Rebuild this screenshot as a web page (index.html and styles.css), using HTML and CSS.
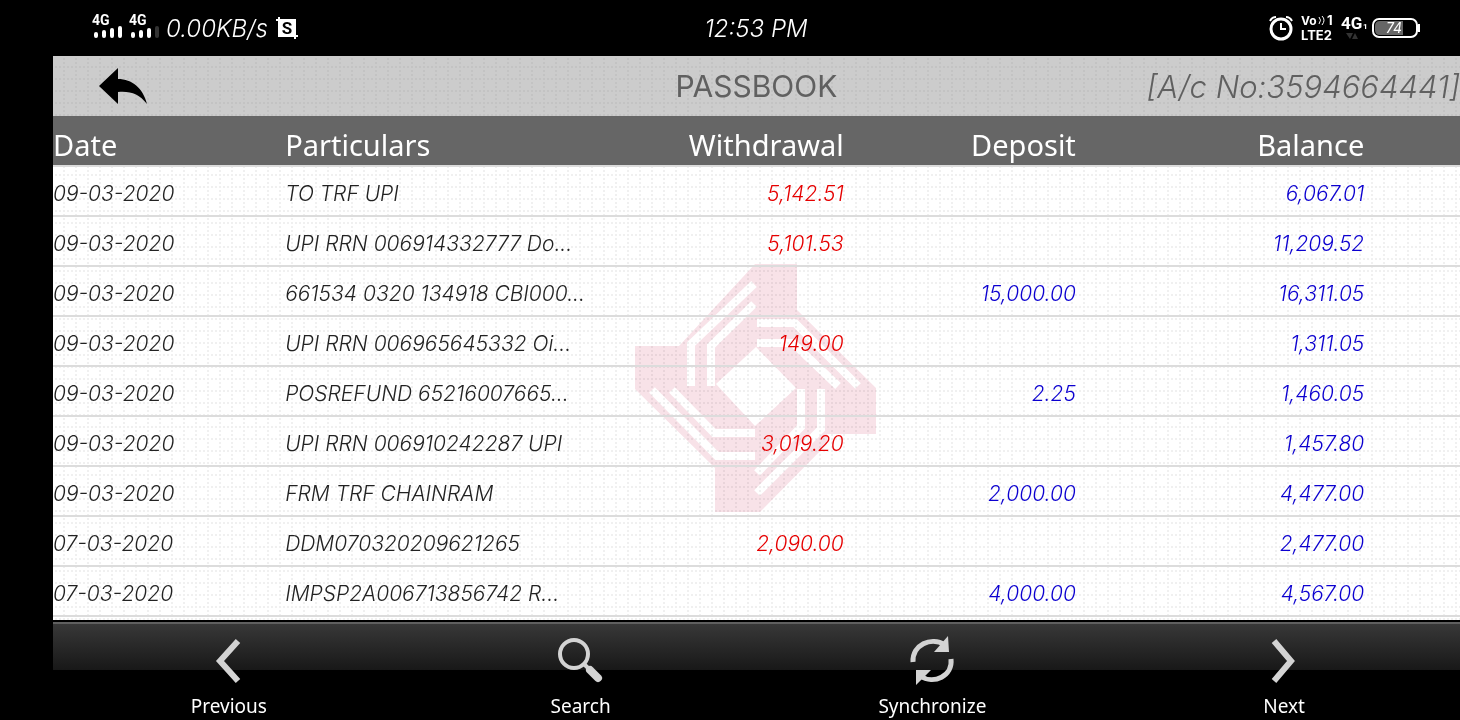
FILE: index.html
```html
<!DOCTYPE html>
<html lang="en">
  <head>
    <meta charset="UTF-8" />
    <meta name="viewport" content="width=device-width, initial-scale=1.0" />
    <title>Passbook</title>
    <link rel="stylesheet" href="styles.css">
  </head>
  <body>
    <div class="status">
      <div class="status-left">
        <svg class="signal" viewBox="0 0 66 28">
          <text x="0" y="11">4G</text>
          <text x="37" y="11">4G</text>
          <path d="M4 20v2M12 18v4M20 16v6M28 14v8M41 20v2M49 18v4M57 16v6" stroke="#fff" stroke-width="4" stroke-linecap="round" />
          <path d="M65 14v8" stroke="#333" stroke-width="4" stroke-linecap="round" />
        </svg>
        <span class="speed">0.00KB/s</span>
        <svg class="crop" viewBox="0 0 22 22">
          <path d="M0 3h19v19M3 0v19h19" fill="none" stroke="#fff" stroke-width="2" />
          <path d="M3 3h16v16H3z" fill="#fff" />
          <text x="11" y="17" text-anchor="middle">S</text>
        </svg>
      </div>
      <time class="clock">12:53 PM</time>
      <div class="status-right">
        <svg class="alarm" viewBox="0 0 24 24" fill="none" stroke="#fff" stroke-width="3">
          <circle cx="12" cy="13" r="10" />
          <path d="M12 7v6h5M1 5q2-4 6-4M23 5q-2-4-6-4" stroke-width="2" />
        </svg>
        <svg class="volte" viewBox="0 0 34 28">
          <text x="1" y="11" font-size="12">Vo</text>
          <path d="M19 3q3 3 0 7M22 2q4 4 0 9" fill="none" stroke="#fff" />
          <text x="27" y="11" font-size="13">1</text>
          <text x="1" y="26" font-size="13">LTE2</text>
        </svg>
        <svg class="network" viewBox="0 0 24 28">
          <text x="0" y="15" font-size="17">4G</text>
          <text x="22" y="15" font-size="8">1</text>
          <path d="M5 19h7l-3 6zM11 25h6l-3-6z" fill="#333" />
        </svg>
        <svg class="battery" viewBox="0 0 48 20">
          <rect x="1" y="1" width="44" height="18" rx="6" fill="none" stroke="#fff" stroke-width="2" />
          <path d="M8 3h23v14H8q-5 0-5-5V8q0-5 5-5z" fill="#666" />
          <path d="M47 6v8" stroke="#fff" stroke-width="2" />
          <text x="22" y="15" text-anchor="middle">74</text>
        </svg>
      </div>
    </div>

    <div class="app">
      <header class="titlebar">
        <button class="back" aria-label="Back">
          <svg viewBox="0 0 48 37"><path d="M0 18L19 0v11c14 0 25 9 29 25c-8-10-16-13-29-12v12z" /></svg>
        </button>
        <h1>PASSBOOK</h1>
        <span class="account">[A/c No:3594664441]</span>
      </header>

      <main class="passbook">
        <svg class="watermark" viewBox="0 0 242 252">
          <path d="M121 2h42v46l79 78v46h-49v10l-67 68H81v-44L1 127V84h44z" fill="#f8e2e8" />
          <g fill="none" stroke="#fff" stroke-width="8">
            <path d="M120 22L57 82v42M120 42L77 84v40" />
            <path d="M123 61h38l63 63M123 81h36l45 43" />
            <path d="M18 128l65 66h38M38 128l42 43h41" />
            <path d="M187 127v40l-64 64M167 127v38l-44 46" />
          </g>
          <path d="M122 85l40 41-41 38-39-42z" fill="#fff" />
        </svg>
        <table>
          <colgroup>
            <col class="col-date">
            <col class="col-particulars">
            <col class="col-withdrawal">
            <col class="col-deposit">
            <col class="col-balance">
            <col>
          </colgroup>
          <thead>
            <tr><th>Date</th><th>Particulars</th><th class="num">Withdrawal</th><th class="num">Deposit</th><th class="num">Balance</th><th></th></tr>
          </thead>
          <tbody>
            <tr><td>09-03-2020</td><td>TO TRF UPI</td><td class="num debit">5,142.51</td><td></td><td class="num">6,067.01</td><td></td></tr>
            <tr><td>09-03-2020</td><td>UPI RRN 006914332777 Do...</td><td class="num debit">5,101.53</td><td></td><td class="num">11,209.52</td><td></td></tr>
            <tr><td>09-03-2020</td><td>661534 0320 134918 CBI000...</td><td></td><td class="num">15,000.00</td><td class="num">16,311.05</td><td></td></tr>
            <tr><td>09-03-2020</td><td>UPI RRN 006965645332 Oi...</td><td class="num debit">149.00</td><td></td><td class="num">1,311.05</td><td></td></tr>
            <tr><td>09-03-2020</td><td>POSREFUND 65216007665...</td><td></td><td class="num">2.25</td><td class="num">1,460.05</td><td></td></tr>
            <tr><td>09-03-2020</td><td>UPI RRN 006910242287 UPI</td><td class="num debit">3,019.20</td><td></td><td class="num">1,457.80</td><td></td></tr>
            <tr><td>09-03-2020</td><td>FRM TRF CHAINRAM</td><td></td><td class="num">2,000.00</td><td class="num">4,477.00</td><td></td></tr>
            <tr><td>07-03-2020</td><td>DDM070320209621265</td><td class="num debit">2,090.00</td><td></td><td class="num">2,477.00</td><td></td></tr>
            <tr><td>07-03-2020</td><td>IMPSP2A006713856742 R...</td><td></td><td class="num">4,000.00</td><td class="num">4,567.00</td><td></td></tr>
          </tbody>
        </table>
      </main>

      <nav class="toolbar">
        <button>
          <svg viewBox="0 0 48 48"><path d="M33 5L15 25l18 20" fill="none" stroke="#d3d3d3" stroke-width="6" /></svg>
          Previous
        </button>
        <button>
          <svg viewBox="0 0 48 48" fill="none" stroke="#d3d3d3">
            <circle cx="17" cy="18" r="14" stroke-width="4" />
            <path d="M27 28l5 5" stroke-width="4" />
            <path d="M33 34l8 8" stroke-width="8" stroke-linecap="round" />
          </svg>
          Search
        </button>
        <button>
          <svg viewBox="0 0 48 48">
            <path d="M5 26C4 9 23 0 37 9M43 23c2 17-17 26-31 17" fill="none" stroke="#d3d3d3" stroke-width="5" />
            <path d="M40 0l1 16H26zM8 49V34h15z" fill="#d3d3d3" />
          </svg>
          Synchronize
        </button>
        <button>
          <svg viewBox="0 0 48 48"><path d="M14 5l17 20-17 20" fill="none" stroke="#d3d3d3" stroke-width="6" /></svg>
          Next
        </button>
      </nav>
    </div>
  </body>
</html>
```
FILE: styles.css
```css
:root {
  --title-bg: #ccc;
  --head-bg: #666;
  --text: #222;
  --debit: #e60000;
  --credit: #0c00d0;
  --line: #dcdcdc;
}

* {
  box-sizing: border-box;
}

body {
  display: flex;
  flex-direction: column;
  min-height: 100vh;
  margin: 0;
  background: #000;
  color: #fff;
  font-family: "Noto Sans", "Open Sans", sans-serif;
}

.status {
  display: grid;
  grid-template-columns: 1fr auto 1fr;
  align-items: center;
  height: 56px;
  padding: 0 40px 0 92px;
  font-family: Inter, sans-serif;
  font-size: 24px;
  font-style: italic;
  font-weight: 300;
}

.status-left, .status-right {
  display: flex;
  align-items: center;
  gap: 8px;
}

.status-right {
  justify-content: flex-end;
  gap: 7px;
}

.status svg {
  overflow: visible;
  fill: #fff;
  font-family: Roboto, sans-serif;
  font-style: normal;
  font-weight: 700;
}

.status .signal {
  width: 66px;
  height: 28px;
  font-size: 14px;
}

.status .crop {
  width: 22px;
  height: 22px;
}

.crop text {
  fill: #000;
  font-size: 17px;
}

.status .alarm {
  width: 24px;
  height: 24px;
  fill: none;
}

.status .volte {
  width: 34px;
  height: 28px;
  font-family: Inter, sans-serif;
}

.network {
  width: 24px;
  height: 28px;
}

.battery {
  width: 48px;
  height: 20px;
}

.battery text {
  font-family: Inter, sans-serif;
  font-size: 14px;
  font-style: italic;
  font-weight: 400;
}

.app {
  display: flex;
  flex: 1;
  flex-direction: column;
  margin-left: 53px;
}

/* dotted graph paper, one 2px square per layer */
.titlebar, .passbook {
  --square: conic-gradient(from 270deg at 2px 2px, var(--dot) 90deg, transparent 0);
  background-image: var(--square), var(--square), var(--square), var(--square), var(--square);
  background-position: 10px 10px, 2px 10px, 6px 10px, 10px 2px, 10px 6px;
  background-size: 12px 12px;
}

.titlebar {
  --dot: #c3c3c3;
  display: grid;
  grid-template-columns: 1fr auto 1fr;
  align-items: center;
  height: 60px;
  background-color: var(--title-bg);
  color: #606060;
}

.titlebar h1 {
  margin: 0;
  font-family: Inter, sans-serif;
  font-size: 30px;
  font-weight: 400;
}

.account {
  justify-self: end;
  font-family: Inter, sans-serif;
  font-size: 31px;
  font-style: italic;
  font-weight: 300;
}

.back {
  justify-self: start;
  margin-left: 46px;
  padding: 0;
  border: 0;
  background: none;
}

.back svg {
  display: block;
  width: 48px;
  height: 37px;
}

.passbook {
  --dot: #f0f0f0;
  position: relative;
  flex: 1;
  background-color: #fff;
}

.watermark {
  position: absolute;
  top: 146px;
  left: 50%;
  width: 242px;
  height: 252px;
  margin-left: -123px;
  mix-blend-mode: multiply;
}

table {
  position: relative;
  width: 100%;
  border-collapse: collapse;
  table-layout: fixed;
}

.col-date, .col-deposit {
  width: 16.5%;
}

.col-particulars {
  width: 22%;
}

.col-withdrawal {
  width: 17.7%;
}

.col-balance {
  width: 20.5%;
}

th, td {
  height: 50px;
  padding: 0;
  border-bottom: 2px solid var(--line);
  text-align: left;
  white-space: nowrap;
}

th {
  padding-top: 8px;
  background: var(--head-bg);
  font-size: 29px;
  font-weight: 400;
  line-height: 40px;
}

td {
  padding-top: 4px;
  color: var(--text);
  font-family: Inter, sans-serif;
  font-size: 21px;
  font-style: italic;
  font-weight: 300;
}

.num {
  text-align: right;
}

td.num {
  color: var(--credit);
}

td.debit {
  color: var(--debit);
}

.toolbar {
  display: grid;
  grid-template-columns: repeat(4, 1fr);
  height: 100px;
  border-top: 2px solid #000;
  background: linear-gradient(#393939, #181818) 0 0 / 100% 48px no-repeat;
  box-shadow: inset 0 2px #606060;
}

.toolbar button {
  display: flex;
  flex-direction: column;
  align-items: center;
  gap: 10px;
  padding: 14px 0 0;
  border: 0;
  background: none;
  color: #fff;
  font: 19px/24px "Noto Sans", sans-serif;
  cursor: pointer;
}

.toolbar svg {
  width: 48px;
  height: 48px;
  overflow: visible;
}
```
